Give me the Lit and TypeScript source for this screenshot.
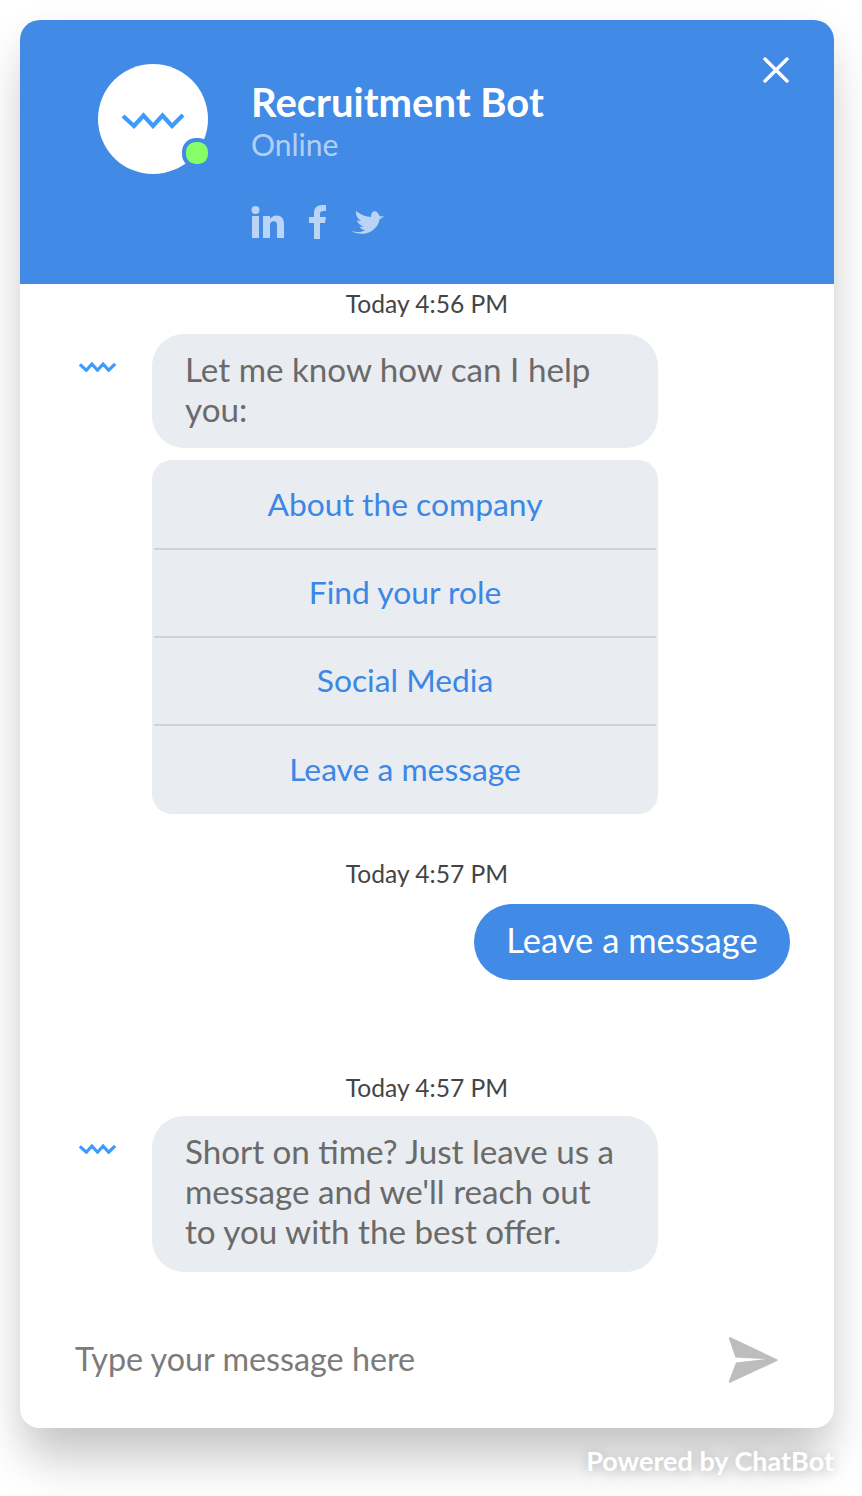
import { LitElement, html, css } from "lit";
import { customElement } from "lit/decorators.js";

const zig = (w: number, h: number, sw: number) => html`<svg class="zig" width=${w} height=${h} viewBox="0 0 64 17" fill="none"><polyline points="2,4 13,14 22.500,3.500 32,14 41.500,3.500 51,14 62,3" stroke="#3d9bfb" stroke-width=${sw}/></svg>`;

@customElement("app-root")
export class AppRoot extends LitElement {
  static styles = css`
    :host { display: block; height: 1496px; overflow: hidden; background: #fff; font-family: "Lato", "Noto Sans", sans-serif; position: relative; }
    * { box-sizing: border-box; }
    .page { padding: 20px 28px 0 20px; }
    .card { height: 1408px; background: #fff; border-radius: 20px; box-shadow: 0 20px 40px rgba(0,0,0,.14), 0 50px 50px -10px rgba(0,0,0,.11); display: flex; flex-direction: column; }
    .head { height: 264px; background: #418ae5; border-radius: 20px 20px 0 0; padding: 37px 45px 0 78px; display: flex; align-items: flex-start; }
    .avatar { width: 110px; height: 110px; margin-top: 7px; border-radius: 50%; background: #fff; position: relative; display: flex; align-items: center; justify-content: center; flex: none; margin-right: 44px; }
    .avatar .zig { margin-top: 2px; }
    .dot { position: absolute; left: 84px; top: 74px; width: 30px; height: 30px; border-radius: 46%; background: #86ff66; border: 4px solid #418ae5; }
    .info { flex: 1; display: flex; flex-direction: column; }
    .name { font-size: 40px; font-weight: 700; line-height: 46px; margin-top: 22px; margin-left: -1px; color: #fff; }
    .status { font-size: 30px; line-height: 36px; color: rgba(255,255,255,.62); margin-top: 1px; margin-left: -1px; }
    .social { display: flex; align-items: center; gap: 24px; margin-top: 42px; height: 36px; margin-left: -1px; }
    .close { flex: none; width: 26px; height: 26px; }
    .body { flex: 1; display: flex; flex-direction: column; }
    .time { text-align: center; font-size: 24.600px; line-height: 28px; color: #444; }
    .t1 { margin-top: 6px; margin-bottom: 16px; }
    .t2 { margin-top: 46px; margin-bottom: 16px; }
    .t3 { margin-top: 94px; margin-bottom: 14px; }
    .row { display: flex; align-items: flex-start; padding-left: 58px; }
    .row .zig { flex: none; margin-top: 28px; margin-right: 35px; }
    .col { width: 506px; display: flex; flex-direction: column; gap: 12px; }
    .bubble { background: #e9ecf0; border-radius: 32px; padding: 15px 33px 19px; font-size: 33.200px; line-height: 40px; color: #6a6a6a; }
    .bubble.tall { padding-bottom: 21px; }
    .opts { background: #e9ecf0; border-radius: 20px; padding: 2px 2px 0; }
    .opt { height: 88px; display: flex; align-items: center; justify-content: center; font-size: 31.800px; color: #3b87e6; border-bottom: 2px solid #cfd3d9; padding-bottom: 2px; }
    .opt:last-child { border-bottom: 0; padding-bottom: 3px; }
    .mine { align-self: flex-end; margin-right: 44px; height: 76px; width: 316px; justify-content: center; border-radius: 38px; background: #418ae5; color: #fff; font-size: 34.500px; display: flex; align-items: center; padding-bottom: 5px; }
    .input { height: 136px; padding: 0 56px 0 55px; display: flex; align-items: center; justify-content: space-between; font-size: 32.300px; color: #7b7b7b; margin-top: auto; }
    .input span { margin-top: -4px; }
    .powered { text-align: right; margin-top: 17px; font-size: 27px; line-height: 32px; font-weight: 700; color: #fff; text-shadow: 0 2px 12px rgba(0,0,0,.22); }
  `;

  render() {
    return html`<div class="page">
      <div class="card">
        <div class="head">
          <div class="avatar">${zig(64, 17, 4.2)}<span class="dot"></span></div>
          <div class="info">
            <div class="name">Recruitment Bot</div>
            <div class="status">Online</div>
            <div class="social">
              <svg width="34" height="34" viewBox="0 0 34 34" fill="#b9d4f5"><circle cx="4.500" cy="5" r="4"/><rect x="1" y="11" width="7" height="22"/><path d="M12 11h7v3c1.500-2.300 3.800-3.500 6.500-3.500 5 0 7.500 3.300 7.500 8.500v14.000h-7V20.500c0-2.800-1-4.200-3.300-4.200-2.300 0-3.700 1.600-3.700 4.400V33h-7z"/></svg>
              <svg width="18" height="34" viewBox="0 0 18 34" fill="#b9d4f5"><path d="M5 34V18H0v-6h5V8c0-5 3-8 8-8h4v6h-3c-2 0-3 1-3 3v3h6l-1 6h-5v16z"/></svg>
              <svg width="34" height="24" viewBox="0 0 34 24" fill="#b9d4f5"><path d="M34 7.500l-4.300.800c1.500-.800 2.800-1.500 3.500-2.200l-4.200.3C27.400 3.600 25.500 0 22.500 1.500 20 2.600 20 5.500 20.200 7 15 6.700 10 5 5 1c-.5 4 1 7 5 10-1.500 0-3-.5-4-1 .5 3 3 5.500 6.500 6.500-1.500.5-3 .5-4 .3 1 2 3 3 5.500 3.200C11 22.500 5.500 22.500 0 21c6 3 13 4 19 1 6-3 9.500-9 9.500-13z"/></svg>
            </div>
          </div>
          <svg class="close" viewBox="0 0 26 26" fill="none" stroke="#fff" stroke-width="3.400" stroke-linecap="round"><path d="M2 2l22 22M24 2L2 24"/></svg>
        </div>
        <div class="body">
          <div class="time t1">Today 4:56 PM</div>
          <div class="row">${zig(39, 10, 5.4)}
            <div class="col">
              <div class="bubble">Let me know how can I help<br>you:</div>
              <div class="opts">
                <div class="opt">About the company</div>
                <div class="opt">Find your role</div>
                <div class="opt">Social Media</div>
                <div class="opt">Leave a message</div>
              </div>
            </div>
          </div>
          <div class="time t2">Today 4:57 PM</div>
          <div class="mine">Leave a message</div>
          <div class="time t3">Today 4:57 PM</div>
          <div class="row">${zig(39, 10, 5.4)}
            <div class="col">
              <div class="bubble tall">Short on time? Just leave us a<br>message and we'll reach out<br>to you with the best offer.</div>
            </div>
          </div>
          <div class="input"><span>Type your message here</span>
            <svg width="50" height="46" viewBox="0 0 50 46" fill="#bdbdbd"><path d="M2.500.3C1.300-.100.500.800 1 2l6.500 18.500L38 22 8 25.500 1 43.800c-.5 1.400.4 2.400 1.700 1.800L49 24c1-.5 1-1.300 0-1.800z"/></svg>
          </div>
        </div>
      </div>
      <div class="powered">Powered by ChatBot</div>
    </div>`;
  }
}
